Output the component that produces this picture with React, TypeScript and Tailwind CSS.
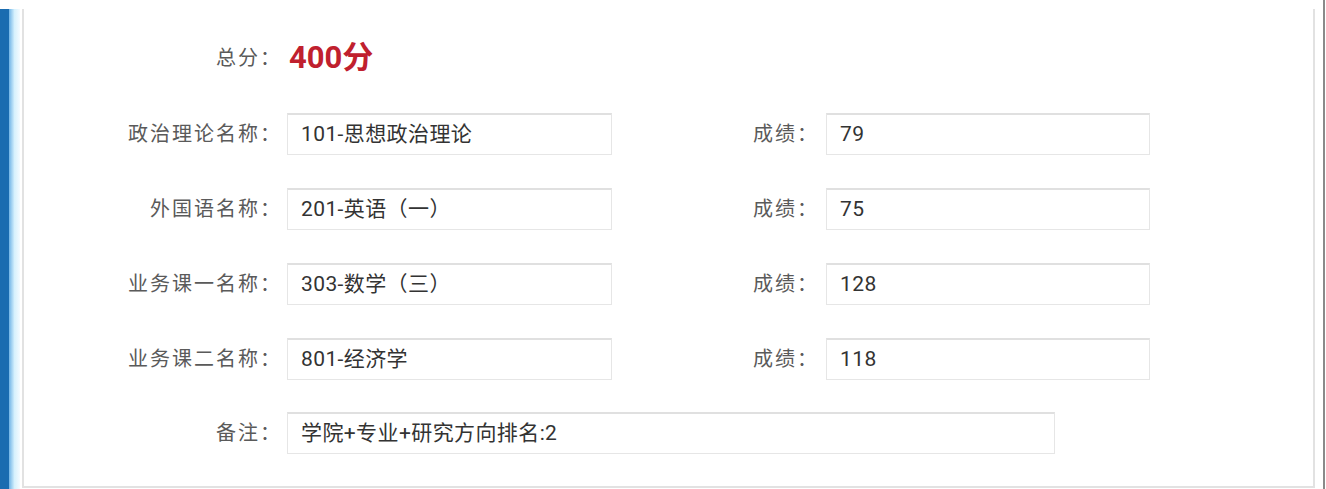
import React from "react";

const rows = [
  { label: "政治理论名称：", name: "101-思想政治理论", score: "79" },
  { label: "外国语名称：", name: "201-英语（一）", score: "75" },
  { label: "业务课一名称：", name: "303-数学（三）", score: "128" },
  { label: "业务课二名称：", name: "801-经济学", score: "118" },
];

function Field({ value, w }: { value: string; w: string }) {
  return (
    <div
      className={`${w} h-[42px] flex items-center pl-[13px] border border-[#e6e6e6] border-t-2 border-t-[#e0e0e0] bg-white text-[21px] tracking-[0.4px] text-[#333]`}
    >
      {value}
    </div>
  );
}

export default function App() {
  return (
    <div
      className="w-[1326px] h-[489px] bg-white flex overflow-hidden"
      style={{ fontFamily: 'Roboto, "Noto Sans CJK SC", sans-serif' }}
    >
      <div className="pt-[9px] flex">
        <div className="w-[9px] h-full bg-[#1a6cb0]" />
        <div className="w-[11px] h-full bg-gradient-to-r from-[#6fb4e6] via-[#d6f1fd] to-[#f4fbff]" />
      </div>
      <div className="ml-[2px] mt-[9px] w-[1293px] h-[479px] border-l-2 border-r-2 border-b-2 border-[#e2e2e2] pt-[28px]">
        <div className="flex items-center h-[42px]">
          <div className="w-[258px] text-right text-[20px] tracking-[2px] text-[#5a5a5a]">总分：</div>
          <div className="ml-[7px] text-[31px] font-bold text-[#c0202e]">400分</div>
        </div>
        <div className="mt-[34px] flex flex-col gap-[33px]">
          {rows.map((r) => (
            <div key={r.label} className="flex items-center h-[42px]">
              <div className="w-[258px] text-right text-[20px] tracking-[2px] text-[#5a5a5a]">{r.label}</div>
              <div className="ml-[5px]">
                <Field value={r.name} w="w-[325px]" />
              </div>
              <div className="w-[207px] text-right text-[20px] tracking-[2px] text-[#5a5a5a]">成绩：</div>
              <div className="ml-[7px]">
                <Field value={r.score} w="w-[324px]" />
              </div>
            </div>
          ))}
          <div className="flex items-center h-[42px] -mt-[1px]">
            <div className="w-[258px] text-right text-[20px] tracking-[2px] text-[#5a5a5a]">备注：</div>
            <div className="ml-[5px]">
              <Field value="学院+专业+研究方向排名:2" w="w-[768px]" />
            </div>
          </div>
        </div>
      </div>
      <div className="flex-1" />
      <div className="w-[2px] h-full bg-[#8a8a8a] mr-[1px]" />
    </div>
  );
}
